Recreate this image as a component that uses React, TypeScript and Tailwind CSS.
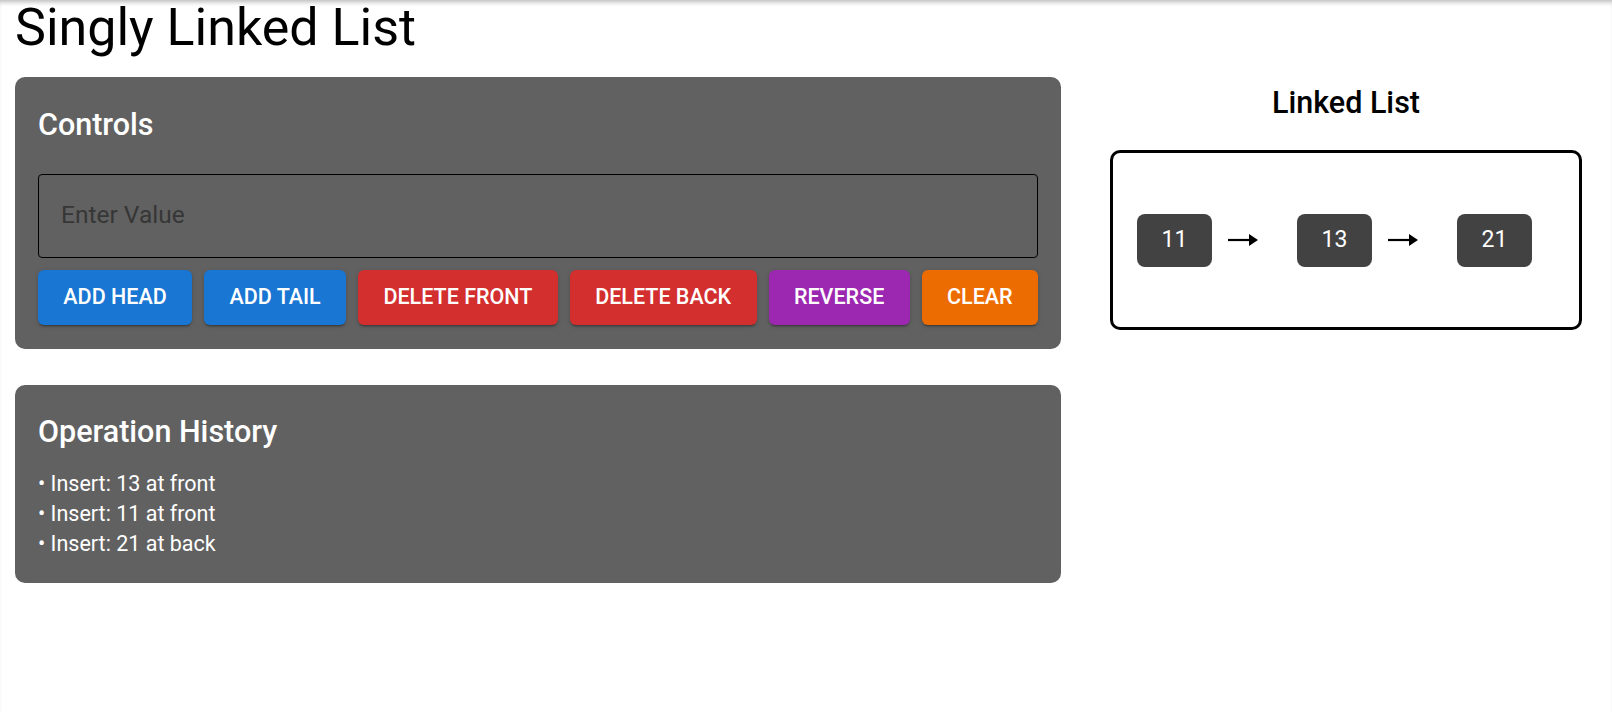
import { useState } from 'react';

const buttonShadow =
  'shadow-[0px_3px_1px_-2px_rgba(0,0,0,0.2),0px_2px_2px_0px_rgba(0,0,0,0.14),0px_1px_5px_0px_rgba(0,0,0,0.12)]';

function Arrow() {
  return (
    <svg width="30" height="14" viewBox="0 0 30 14" className="ml-[16px] mr-[39px] shrink-0">
      <line x1="0" y1="7" x2="23" y2="7" stroke="black" strokeWidth="2.2" />
      <polygon points="21,1 30,7 21,13" fill="black" />
    </svg>
  );
}

export default function App() {
  const [value, setValue] = useState('');
  const [list, setList] = useState<number[]>([11, 13, 21]);
  const [history, setHistory] = useState<string[]>([
    'Insert: 13 at front',
    'Insert: 11 at front',
    'Insert: 21 at back',
  ]);

  const log = (msg: string) => setHistory(prev => [...prev, msg]);

  const addHead = () => {
    const n = Number(value);
    if (value === '' || isNaN(n)) return;
    setList(prev => [n, ...prev]);
    log(`Insert: ${n} at front`);
    setValue('');
  };

  const addTail = () => {
    const n = Number(value);
    if (value === '' || isNaN(n)) return;
    setList(prev => [...prev, n]);
    log(`Insert: ${n} at back`);
    setValue('');
  };

  const deleteFront = () => {
    if (list.length === 0) return;
    log(`Delete: ${list[0]} from front`);
    setList(prev => prev.slice(1));
  };

  const deleteBack = () => {
    if (list.length === 0) return;
    log(`Delete: ${list[list.length - 1]} from back`);
    setList(prev => prev.slice(0, -1));
  };

  const reverse = () => {
    setList(prev => [...prev].reverse());
    log('Reverse list');
  };

  const clear = () => {
    setList([]);
    log('Clear list');
  };

  const buttons = [
    { label: 'Add Head', onClick: addHead, color: 'bg-[#1976d2]' },
    { label: 'Add Tail', onClick: addTail, color: 'bg-[#1976d2]' },
    { label: 'Delete Front', onClick: deleteFront, color: 'bg-[#d32f2f]' },
    { label: 'Delete Back', onClick: deleteBack, color: 'bg-[#d32f2f]' },
    { label: 'Reverse', onClick: reverse, color: 'bg-[#9c27b0]' },
    { label: 'Clear', onClick: clear, color: 'bg-[#ed6c02]' },
  ];

  return (
    <div
      className="min-h-screen bg-white shadow-[inset_0_5px_5px_-3px_rgba(0,0,0,0.28)]"
      style={{ fontFamily: 'Roboto, "Liberation Sans", sans-serif' }}
    >
      <div className="pl-[15px]">
        <h1 className="text-[52px] leading-[56px] font-normal text-black">Singly Linked List</h1>

        <div className="flex mt-[21px]">
          {/* Left column */}
          <div className="w-[1046px] flex flex-col gap-[36px]">
            <div className="bg-[#616161] rounded-[10px] px-[23px] pt-[24px] pb-[24px]">
              <h2 className="text-[30.5px] leading-[48px] font-medium text-white">Controls</h2>
              <input
                value={value}
                onChange={e => setValue(e.target.value)}
                placeholder="Enter Value"
                className="mt-[25px] w-full h-[84px] bg-transparent border border-black rounded-[4px] px-[22px] pb-[3px] text-[24.5px] text-black placeholder:text-[#363636] outline-none"
              />
              <div className="flex gap-[12px] mt-[12px]">
                {buttons.map(b => (
                  <button
                    key={b.label}
                    onClick={b.onClick}
                    className={`flex-auto h-[55px] px-4 rounded-[6px] text-white uppercase font-medium text-[21.5px] ${b.color} ${buttonShadow}`}
                  >
                    {b.label}
                  </button>
                ))}
              </div>
            </div>

            <div className="bg-[#616161] rounded-[10px] px-[23px] pt-[23px] pb-[24px]">
              <h2 className="text-[30.5px] leading-[48px] font-medium text-white">Operation History</h2>
              <ul className="mt-[13px]">
                {history.map((h, i) => (
                  <li key={i} className="text-[21.5px] leading-[30px] text-white">
                    • {h}
                  </li>
                ))}
              </ul>
            </div>
          </div>

          {/* Right column */}
          <div className="ml-[49px] w-[472px] pt-[2px]">
            <h2 className="text-center text-[30.5px] leading-[48px] font-medium text-black">Linked List</h2>
            <div className="mt-[23px] h-[180px] border-[3px] border-black rounded-[10px] flex items-center pl-[24px]">
              {list.map((n, i) => (
                <div key={i} className="flex items-center">
                  <div className="bg-[#424242] rounded-[8px] h-[53px] w-[75px] flex items-center justify-center text-white text-[23px]">
                    {n}
                  </div>
                  {i < list.length - 1 && <Arrow />}
                </div>
              ))}
            </div>
          </div>
        </div>
      </div>
    </div>
  );
}
